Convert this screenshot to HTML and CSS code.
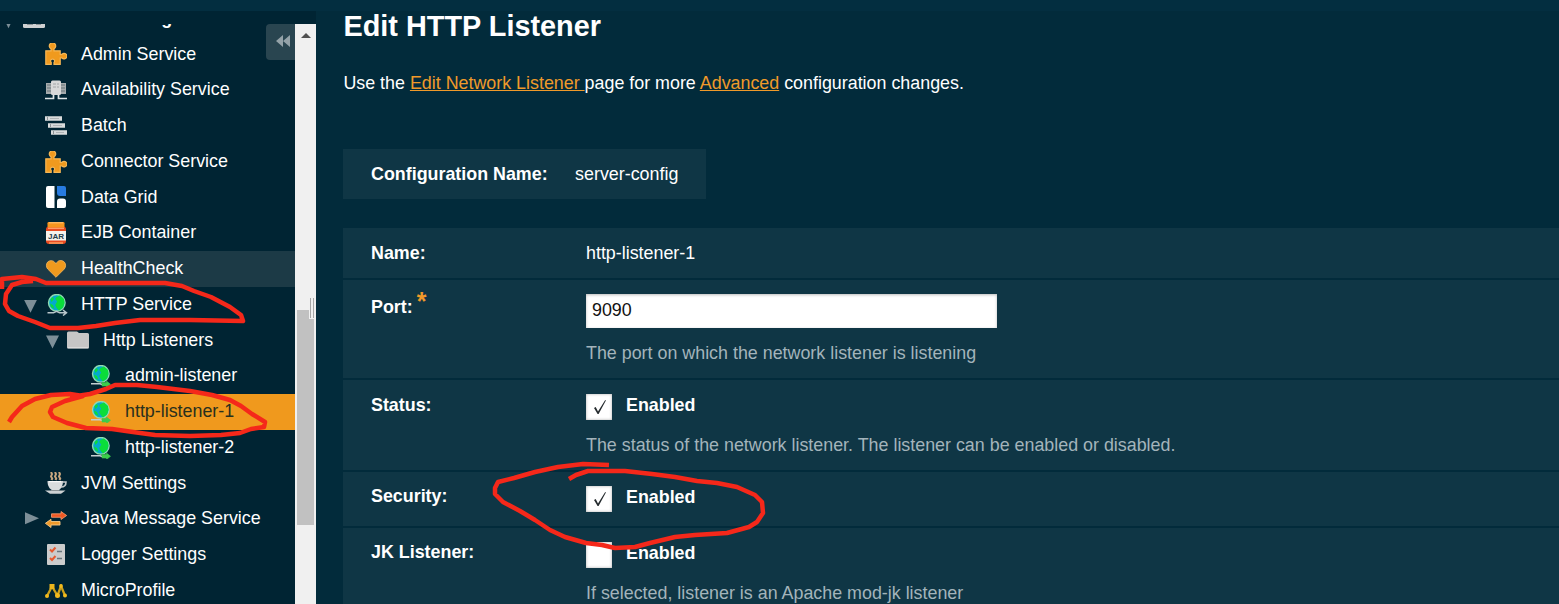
FILE: index.html
```html
<!DOCTYPE html>
<html lang="en">
<head>
<meta charset="utf-8">
<title>Edit HTTP Listener</title>
<link rel="stylesheet" href="styles.css">
</head>
<body>
<svg class="defs" aria-hidden="true">
  <symbol id="puzzle" viewBox="0 0 22 22"><path d="M.8 7.800H6V5.800A3.200 3.200 0 1 1 9 5.800V7.800H15.200V11.300H17A2.800 2.800 0 1 1 17 15H15.200V21.300H9V19.500A2 2 0 1 0 6.200 19.500V21.300H.8Z" fill="#f09a1e" stroke="#f5b654" stroke-width="1.200"/></symbol>
  <symbol id="servers" viewBox="0 0 22 20"><path d="M1 3h7v11H1zM14 3h7v11h-7z" fill="#a6abad"/><path d="M2 5h4M2 8h4M2 11h4M16 5h4M16 8h4M16 11h4" stroke="#697479"/><rect x="6" y=".5" width="10" height="14.500" rx="1.500" fill="#d9d9d9"/><path d="M8 4h3M12 4h2M8 7h3M12 7h2" stroke="#a2a6a8"/><path d="M0 18.500h8.500V15M22 18.500h-8.500V15" fill="none" stroke="#dfe5e7" stroke-width="1.700"/></symbol>
  <symbol id="batch" viewBox="0 0 22 19"><path d="M0 .3h17v4.500H0zM3 7.300h17v4.500H3zM6 14.300h16v4.500H6z" fill="#d9dbdc"/><path d="M5 2.500h9M8 9.500h9M11 16.500h8" stroke="#b0b4b6"/><path d="M2.500 1v3M5.500 8v3M8.500 15v3" stroke="#8d9396"/></symbol>
  <symbol id="grid" viewBox="0 0 20 22"><path d="M2 0h6.500v22H2a2 2 0 0 1-2-2V2a2 2 0 0 1 2-2z" fill="#fff"/><path d="M11 0h7a2 2 0 0 1 2 2v8h-6a3 3 0 0 1-3-3z" fill="#287be0"/><path d="M14 12.500h3a3 3 0 0 1 3 3V20a2 2 0 0 1-2 2h-7v-6.500a3 3 0 0 1 3-3z" fill="#fff"/></symbol>
  <symbol id="jar" viewBox="0 0 20 22"><rect x="0" y="4.500" width="20" height="17.500" rx="3" fill="#e84a20"/><rect x="2" y="5.500" width="16" height="1.500" fill="#ff9a68"/><rect x="1.500" y="0" width="17" height="5.500" rx="1.200" fill="#f6951e"/><path d="M3 .8h14M3 21h14" stroke="#ffc67b"/><rect x="0" y="9" width="20" height="9.500" fill="#f4f1eb"/><text x="10" y="16.600" class="jar-text">JAR</text></symbol>
  <symbol id="heart" viewBox="0 0 20 18"><path d="M10 17.300 1.700 9C-.2 6.900.1 3.400 1.900 1.800 4.600-.2 8 .3 10 4 12-.3 15.400-.2 18.100 1.800 19.900 3.400 20.200 6.900 18.300 9Z" fill="#f09a1e" stroke="#f6b85c" stroke-width=".8"/></symbol>
  <symbol id="globe" viewBox="0 0 22 22"><circle cx="10.800" cy="8.800" r="8.300" fill="#04a9ce" stroke="#8fdbb0" stroke-width="1.400"/><path d="M10.500 3 14 1.500l4 3.500 .5 4-1.500 4.500-4 3-2.300-2.500-1.500-3 2-3.500-2-2.500zM4.500 5 7 3 8 5 5.500 8zM4 9.500l3 1.500 1.500 4-3.500-2z" fill="#0add3a"/></symbol>
  <symbol id="http" viewBox="0 0 22 22"><use href="#globe"/><path d="M1.500 18.800h6l3-1.500 3 1.500h6M17 16l3.500 2.800-3.500 2.700" fill="none" stroke="#b9c6ca" stroke-width="1.500"/></symbol>
  <symbol id="listener" viewBox="0 0 22 22"><use href="#globe"/><path d="M1 18.800h9l3 1" fill="none" stroke="#c5ced1" stroke-width="1.500"/><path d="M12 17.600h4.500v-1.500l4 3.200-4 3.200v-1.500H12z" fill="#3dcb4c" stroke="#3dcb4c" stroke-width=".6"/></symbol>
  <symbol id="folder" viewBox="0 0 22 18"><path d="M0 2A1.500 1.500 0 0 1 1.500.5H10l2 1.500h8.500A1.500 1.500 0 0 1 22 3.500V16a1.500 1.500 0 0 1-1.500 1.500h-19A1.500 1.500 0 0 1 0 16Z" fill="#c6c6c6"/><path d="M.5 16.800h21" stroke="#e4e4e4"/></symbol>
  <symbol id="cup" viewBox="0 0 22 22"><path d="M6 0 7 2 6 4.500 7.200 6.500 6.500 8M10 0l1 2L10 4.500l1.200 2-.7 1.500M14 0l1 2L14 4.500l1.200 2-.7 1.500" fill="none" stroke="#c7a77f" stroke-width="2"/><path d="M2.500 9H18c0 5-2 7.500-4.500 9.500H7.500C4.500 17 2.500 14 2.500 9z" fill="#d9dcdd"/><path d="M18 10h3c0 3-1 5-5 5" fill="none" stroke="#c3c8ca" stroke-width="1.600"/><path d="M0 18.500h20.500L16 21.800H5z" fill="#ccd1d3"/><path d="M6 18.500h8" stroke="#8b9295"/><path d="M4 9.700h12" stroke="#fff"/></symbol>
  <symbol id="arrows" viewBox="0 0 22 17"><path d="M6.500 2.800h9.500V.5L21.700 4.500 16 8.500V6.300H6.500z" fill="#f05824" stroke="#f8a070" stroke-width=".8"/><path d="M15 10.500H6V8.300L.4 12.300 6 16.500V14H15z" fill="#f09a2a" stroke="#f8ca86" stroke-width=".9"/></symbol>
  <symbol id="logger" viewBox="0 0 18 21"><rect width="18" height="21" rx="1" fill="#cbcccc"/><path d="m3 5.500 2 2 3.500-4M3 14l2 2 3.500-4" fill="none" stroke="#e65a30" stroke-width="2"/><path d="M10 7.500h5M10 14.500h5" stroke="#69767c" stroke-width="1.700"/></symbol>
  <symbol id="profile" viewBox="0 0 22 14"><path d="M2 12 7 2.500 12.500 11.500 16 2 20 11.500" fill="none" stroke="#cda11b" stroke-width="2.300"/><path d="M4.500 0h5v5h-5z" fill="#edb51c"/><g fill="#f2ba1d"><circle cx="2" cy="12" r="2"/><circle cx="12.500" cy="11.500" r="2.500"/><circle cx="16" cy="2" r="1.900"/><circle cx="20" cy="11.500" r="2"/></g></symbol>
  <symbol id="config" viewBox="0 0 22 18"><rect width="22" height="18" rx="1.500" fill="#cfd1d2"/><path d="M4 14h6M13 14h5" stroke="#777f83" stroke-width="1.500"/></symbol>
</svg>
<div class="page">
  <aside class="sidebar">
    <nav class="tree">
      <div class="row root"><i class="tw down"></i><svg class="ic folder"><use href="#config"/></svg><span>server-config</span></div>
      <div class="row"><i class="tw"></i><svg class="ic"><use href="#puzzle"/></svg><span>Admin Service</span></div>
      <div class="row"><i class="tw"></i><svg class="ic servers"><use href="#servers"/></svg><span>Availability Service</span></div>
      <div class="row"><i class="tw"></i><svg class="ic mid"><use href="#batch"/></svg><span>Batch</span></div>
      <div class="row"><i class="tw"></i><svg class="ic"><use href="#puzzle"/></svg><span>Connector Service</span></div>
      <div class="row"><i class="tw"></i><svg class="ic"><use href="#grid"/></svg><span>Data Grid</span></div>
      <div class="row"><i class="tw"></i><svg class="ic"><use href="#jar"/></svg><span>EJB Container</span></div>
      <div class="row hover"><i class="tw"></i><svg class="ic heart"><use href="#heart"/></svg><span>HealthCheck</span></div>
      <div class="row"><i class="tw down"></i><svg class="ic shifted"><use href="#http"/></svg><span>HTTP Service</span></div>
      <div class="row sub"><i class="tw down"></i><svg class="ic folder"><use href="#folder"/></svg><span>Http Listeners</span></div>
      <div class="row leaf"><i class="tw"></i><svg class="ic shifted"><use href="#listener"/></svg><span>admin-listener</span></div>
      <div class="row leaf selected"><i class="tw"></i><svg class="ic shifted"><use href="#listener"/></svg><span>http-listener-1</span></div>
      <div class="row leaf"><i class="tw"></i><svg class="ic shifted"><use href="#listener"/></svg><span>http-listener-2</span></div>
      <div class="row"><i class="tw"></i><svg class="ic"><use href="#cup"/></svg><span>JVM Settings</span></div>
      <div class="row"><i class="tw right"></i><svg class="ic arrows"><use href="#arrows"/></svg><span>Java Message Service</span></div>
      <div class="row"><i class="tw"></i><svg class="ic logger"><use href="#logger"/></svg><span>Logger Settings</span></div>
      <div class="row"><i class="tw"></i><svg class="ic profile"><use href="#profile"/></svg><span>MicroProfile</span></div>
    </nav>
    <div class="scrollbar">
      <svg class="up" viewBox="0 0 10 5"><path d="M0 5 5 0l5 5z"/></svg>
      <div class="thumb"></div>
    </div>
    <div class="collapse"><svg viewBox="0 0 14 12"><path d="M7 0v12L0 6zM14 0v12L7 6z"/></svg></div>
    <div class="grip"></div>
  </aside>
  <main class="content">
    <h1>Edit HTTP Listener</h1>
    <p class="intro">Use the <a>Edit Network Listener </a>page for more <a>Advanced</a> configuration changes.</p>
    <div class="config"><b>Configuration Name:</b><span>server-config</span></div>
    <section class="form">
      <div class="field name"><div class="label">Name:</div><div class="value">http-listener-1</div></div>
      <div class="field port"><div class="label">Port: <span class="star">*</span></div><div class="value"><div class="input">9090</div><p class="help help-port">The port on which the network listener is listening</p></div></div>
      <div class="field status"><div class="label">Status:</div><div class="value"><div class="check"><span class="box"><svg viewBox="0 0 12 14"><path d="m0 8 1.700-1 2.300 4.500L11.200 0l.7.400L4.600 14H3.600z"/></svg></span><b>Enabled</b></div><p class="help">The status of the network listener. The listener can be enabled or disabled.</p></div></div>
      <div class="field security"><div class="label">Security:</div><div class="value lowered"><div class="check"><span class="box"><svg viewBox="0 0 12 14"><path d="m0 8 1.700-1 2.300 4.500L11.200 0l.7.400L4.600 14H3.600z"/></svg></span><b>Enabled</b></div></div></div>
      <div class="field jk"><div class="label">JK Listener:</div><div class="value lowered"><div class="check"><span class="box"></span><b>Enabled</b></div><p class="help">If selected, listener is an Apache mod-jk listener</p></div></div>
    </section>
  </main>
  <svg class="marks" viewBox="0 0 1559 604">
    <path d="M2 289V279L22 277 36 279 46 283 165 283 182 286 194 291 211 297 230 307 241 315 243 321 190 320 140 320 115 323 96 326 78 328 50 328 35 322 18 316 9 311 5 304 6 294 12 285 22 282 33 281"/>
    <path d="M9 422 12 417 22 406 35 399 51 395 70 394 83 396 65 401 52 407 50 412 53 417 67 423 86 428 112 429 133 432 155 435 190 436 221 435 240 433 251 429 264 427 265 422 252 414 241 406 230 400 212 395 190 391 157 387 137 385 115 385 106 389 90 394 70 397"/>
    <path d="M609 465 583 464 558 467 535 472 514 478 498 482 495 488 495 494 503 502 520 511 535 520 550 530 565 537 586 543 602 545 615 548 635 547 650 543 675 537 695 535 727 533 749 527 757 522 763 513 762 502 755 495 737 487 717 483 697 481 675 477 652 474 625 471 588 471 576 475 569 479"/>
  </svg>
</div>
</body>
</html>
```
FILE: styles.css
```css
* { box-sizing: border-box; }
body { margin: 0; width: 1559px; height: 604px; overflow: hidden; background: #022b3b; color: #fff; font: 17.870px/20px "Liberation Sans", Arial, sans-serif; }
p, h1 { margin: 0; }
.defs { display: none; }
.page { position: relative; display: flex; height: 604px; padding-top: 11px; overflow: hidden; }
.page::before { content: ""; position: absolute; inset: 0 0 auto; height: 11px; background: #032e40; }
.sidebar { position: relative; flex: none; display: flex; width: 316px; height: 593px; padding-top: 13px; background: #002433; }
.tree { width: 295px; height: 580px; overflow: hidden; }
.row { display: flex; align-items: center; height: 35.750px; padding-left: 24px; white-space: nowrap; }
.row.root { margin-top: -23.250px; padding-left: 2px; font-weight: bold; }
.row.sub { padding-left: 46px; }
.row.leaf { padding-left: 68px; }
.row.hover { background: #1c3a46; }
.row.selected { background: #f0991d; color: #28301d; }
.row span { padding-bottom: 1.300px; }
.tw { flex: none; width: 15px; height: 14px; margin: 4px 6px 0 0; background: #7d8f98; clip-path: polygon(0 0, 0 0, 0 0); }
.tw.down { clip-path: polygon(0 0, 13px 0, 6.500px 13px); }
.root .tw.down { margin-top: 7px; }
.tw.right { margin-top: 0; clip-path: polygon(1px 0, 15px 6px, 1px 12px); }
.ic { flex: none; width: 22px; height: 22px; margin-right: 14px; }
.mid { height: 19px; }
.servers { height: 20px; margin-top: -1px; }
.arrows { height: 17px; margin-top: 1px; }
.heart { height: 18px; }
.folder { height: 18px; margin-top: -1px; }
.root .folder { margin-top: 1px; }
.logger { height: 21px; }
.profile { height: 14px; margin-top: 1px; }
.shifted { margin-left: 1px; margin-right: 13px; }
.jar-text { font: bold 8px "Liberation Sans", Arial, sans-serif; text-anchor: middle; fill: #243d4b; }
.scrollbar { width: 21px; background: #f0f0f0; padding: 9px 2px 0; }
.up { display: block; width: 10px; height: 5px; margin-left: 4px; fill: #505050; }
.thumb { width: 17px; height: 215px; margin-top: 272px; background: #c1c1c1; }
.collapse { position: absolute; left: 266px; top: 13px; width: 29px; height: 36px; padding: 11px 0 0 10px; border-radius: 4px 0 0 4px; background: #294550; }
.collapse svg { display: block; width: 14px; height: 12px; fill: #94a2a8; }
.grip { position: absolute; left: 309px; top: 286px; width: 6px; height: 22px; border: 1px solid #f0f0f0; background: linear-gradient(90deg, #a5a5a5 1px, #f0f0f0 1px 3px, #a5a5a5 3px); }
.content { flex: 1; padding-left: 27px; }
h1 { font-size: 28.850px; line-height: 32px; margin-top: -1px; text-indent: .5px; }
.intro { margin-top: 31px; white-space: pre; text-indent: .4px; }
a { color: #f09a2a; text-decoration: underline; }
.config { display: flex; gap: 27.500px; width: 363px; height: 50px; margin-top: 56px; padding: 15px 0 0 28px; background: #0f3645; line-height: 20px; }
.form { display: flex; flex-direction: column; gap: 2px; margin-top: 29px; }
.field { display: flex; padding-left: 28px; background: #0f3645; }
.label { width: 215px; font-weight: bold; }
.name { height: 50px; padding-top: 15px; }
.port { height: 98px; padding-top: 14px; }
.port .label { padding-top: 2px; }
.star { position: relative; top: -3px; left: -1px; color: #f09a2a; font-size: 25px; line-height: 16px; }
.input { width: 411px; height: 34px; padding: 6px; background: #fff; color: #111; box-shadow: inset 0 1px 3px #bbb; }
.help { color: #a3b4bb; margin-top: 16px; white-space: nowrap; }
.help-port { margin-top: 15px; }
.status { height: 90px; padding-top: 15px; }
.check { display: flex; gap: 14px; height: 24px; }
.box { width: 26px; height: 26px; margin-top: -1px; padding: 6px 0 0 8px; background: #fff; box-shadow: inset 0 0 3px #aaa; }
.box svg { display: block; width: 12px; height: 14px; fill: #252b2e; }
.security, .jk { padding-top: 14px; }
.security { height: 54px; }
.jk { height: 90px; }
.lowered { padding-top: 1px; }
.lowered .box { margin-top: -1px; }
.marks { position: absolute; inset: 0; width: 1559px; height: 604px; fill: none; stroke: #f5281a; stroke-width: 4.500px; stroke-linejoin: round; }
```
